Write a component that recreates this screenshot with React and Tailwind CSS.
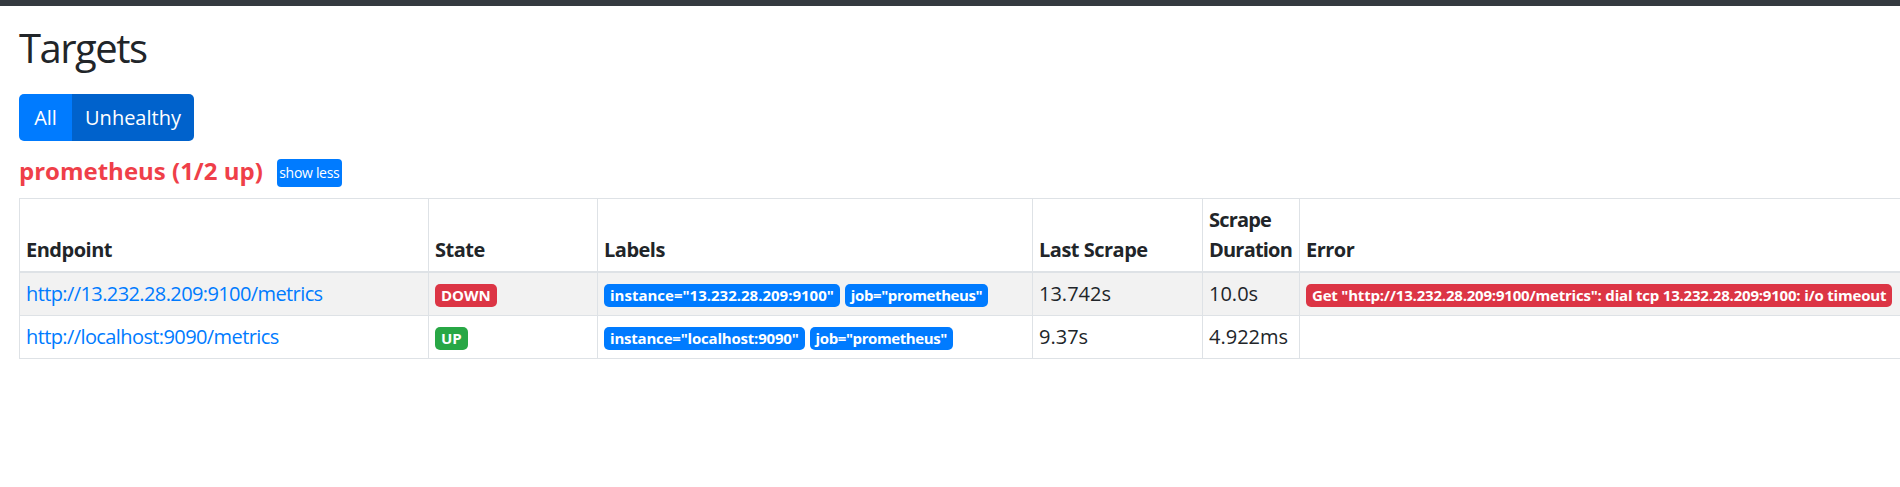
export default function App() {
  const badgeBase =
    "inline-block whitespace-nowrap rounded-[5px] px-[6px] py-[3.75px] text-[15px] leading-none font-bold text-white align-baseline";
  const th =
    "border border-b-2 border-[#dee2e6] p-[6px] text-left align-bottom font-bold tracking-[-0.5px]";
  const td = "border border-[#dee2e6] p-[6px] align-top";
  return (
    <div className="min-h-[487px] w-[1900px] overflow-hidden bg-white font-['Open_Sans','Noto_Sans',sans-serif] text-[20px] leading-[30px] text-[#212529]">
      <div className="h-[6px] bg-[#343a40]" />
      <div className="pl-[19px]">
        <h2 className="mt-[17.5px] text-[40px] leading-[48px] font-normal tracking-[-1.5px] text-[#212529]">Targets</h2>
        <div className="mt-[22.5px] flex h-[47px] w-[175px] overflow-hidden rounded-[5px]">
          <div className="flex w-[53px] items-center justify-center bg-[#007bff] text-white">All</div>
          <div className="flex w-[122px] items-center justify-center bg-[#0062cc] text-white">Unhealthy</div>
        </div>
        <div className="mt-[14.5px] flex items-start">
          <a className="text-[24px] leading-[29px] font-bold text-[#ef3f49]">prometheus (1/2 up)</a>
          <div className="ml-[14px] mt-[3.5px] flex h-[28px] w-[65px] items-center justify-center rounded-[4px] bg-[#007bff] text-[14px] leading-none tracking-[-0.3px] text-white">
            show less
          </div>
        </div>
        <table className="mt-[11px] w-[1882px] table-fixed border-collapse">
          <colgroup>
            <col className="w-[409px]" />
            <col className="w-[169px]" />
            <col className="w-[435px]" />
            <col className="w-[170px]" />
            <col className="w-[97px]" />
            <col className="w-[602px]" />
          </colgroup>
          <thead>
            <tr>
              <th className={th}>Endpoint</th>
              <th className={th}>State</th>
              <th className={th}>Labels</th>
              <th className={th}>Last Scrape</th>
              <th className={th + " tracking-[-0.8px]"}>Scrape Duration</th>
              <th className={th}>Error</th>
            </tr>
          </thead>
          <tbody>
            <tr className="bg-[#f2f2f2]">
              <td className={td + " whitespace-nowrap"}>
                <a className="tracking-[-0.6px] text-[#007bff]">http://13.232.28.209:9100/metrics</a>
              </td>
              <td className={td}>
                <span className={badgeBase + " bg-[#dc3545]"}>DOWN</span>
              </td>
              <td className={td + " whitespace-nowrap"}>
                <span className={badgeBase + " mr-[5px] bg-[#007bff]"}>instance="13.232.28.209:9100"</span>
                <span className={badgeBase + " mr-[5px] tracking-[-0.4px] bg-[#007bff]"}>job="prometheus"</span>
              </td>
              <td className={td}>13.742s</td>
              <td className={td}>10.0s</td>
              <td className={td + " whitespace-nowrap"}>
                <span className={badgeBase + " tracking-[-0.2px] bg-[#dc3545]"}>
                  Get "http://13.232.28.209:9100/metrics": dial tcp 13.232.28.209:9100: i/o timeout
                </span>
              </td>
            </tr>
            <tr>
              <td className={td + " whitespace-nowrap"}>
                <a className="tracking-[-0.6px] text-[#007bff]">http://localhost:9090/metrics</a>
              </td>
              <td className={td}>
                <span className={badgeBase + " bg-[#28a745]"}>UP</span>
              </td>
              <td className={td + " whitespace-nowrap"}>
                <span className={badgeBase + " mr-[5px] tracking-[-0.2px] bg-[#007bff]"}>instance="localhost:9090"</span>
                <span className={badgeBase + " mr-[5px] tracking-[-0.4px] bg-[#007bff]"}>job="prometheus"</span>
              </td>
              <td className={td}>9.37s</td>
              <td className={td}>4.922ms</td>
              <td className={td}></td>
            </tr>
          </tbody>
        </table>
      </div>
    </div>
  );
}
